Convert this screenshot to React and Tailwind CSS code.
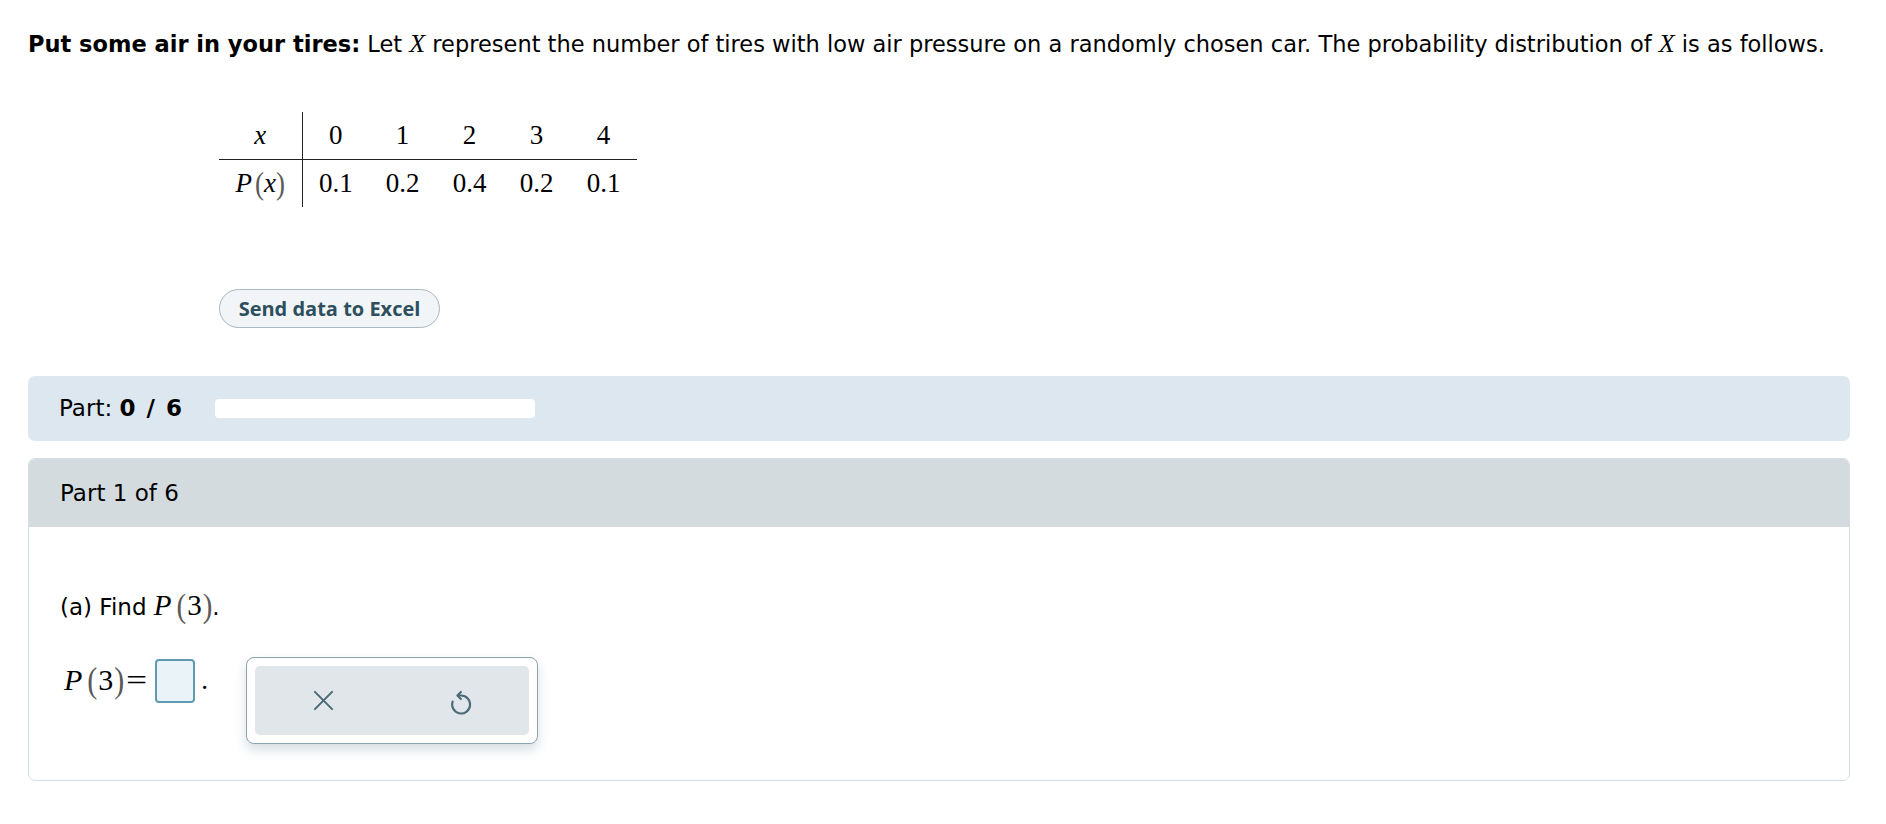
import React from "react";

// ALEKS-style question page: discrete distribution table + Part 1 of 6 card.

const XS = [0, 1, 2, 3, 4];
const PX = ["0.1", "0.2", "0.4", "0.2", "0.1"];

const serif = { fontFamily: '"Liberation Serif", "Times New Roman", serif' };

// thin grey stretchy parens like MathJax renders them
const Paren = ({ children }) => (
  <span className="inline-block scale-y-[1.18] font-light text-[#5a5a5a]">{children}</span>
);

const PofN = ({ n }) => (
  <span style={serif} className="whitespace-nowrap">
    <i>P</i>
    <span className="ml-[5px]">
      <Paren>(</Paren>
      <span className="mx-[1px]">{n}</span>
      <Paren>)</Paren>
    </span>
  </span>
);

const CloseIcon = () => (
  <svg viewBox="0 0 22 22" className="h-[21px] w-[21px]" fill="none" stroke="#4a6a77" strokeWidth="2.1" strokeLinecap="round">
    <path d="M2 2L20 20M20 2L2 20" />
  </svg>
);

// undo arrow: open circle, arrowhead at the top pointing left
const UndoIcon = () => (
  <svg viewBox="0 0 24 24" className="h-[30px] w-[30px]" fill="none" stroke="#4a6a77" strokeWidth="1.7" strokeLinecap="round" strokeLinejoin="round">
    <path d="M5.3 12.4A7.2 7.2 0 1 0 12 7.6H9.4" />
    <path d="M11.9 4.8L9.2 7.6l2.7 2.8" />
  </svg>
);

export default function App() {
  return (
    <div className="min-h-screen bg-white text-black" style={{ fontFamily: '"DejaVu Sans", Verdana, sans-serif' }}>
      <div className="pl-[28px] pr-[36px] pt-[29px] pb-10">
        <p className="whitespace-nowrap text-[22.5px] leading-[30px]">
          <b>Put some air in your tires:</b> Let{" "}
          <i style={serif} className="text-[26px] leading-none">X</i> represent the number of tires with low air pressure on a
          randomly chosen car. The probability distribution of{" "}
          <i style={serif} className="text-[26px] leading-none">X</i> is as follows.
        </p>

        {/* distribution table */}
        <div className="mt-[53px] ml-[191px]">
          <table style={serif} className="border-collapse text-[27px]">
            <tbody>
              <tr className="h-[47px]">
                <td className="w-[83px] border-r border-b border-[#222] text-center italic">x</td>
                {XS.map((x) => (
                  <td key={x} className="w-[67px] border-b border-[#222] text-center">{x}</td>
                ))}
              </tr>
              <tr className="h-[48px]">
                <td className="border-r border-[#222] text-center">
                  <i>P</i>
                  <span className="ml-[3px]">
                    <Paren>(</Paren>
                    <i>x</i>
                    <Paren>)</Paren>
                  </span>
                </td>
                {PX.map((p, i) => (
                  <td key={i} className="text-center">{p}</td>
                ))}
              </tr>
            </tbody>
          </table>
        </div>

        <button
          className="mt-[82px] ml-[191px] h-[39px] w-[221px] rounded-full border border-[#a9b8c1] bg-[#f2f5f7] text-[20px] font-bold text-[#2d4f5e]"
          style={{ fontFamily: '"Open Sans", Lato, sans-serif' }}
        >
          Send data to Excel
        </button>

        {/* progress strip */}
        <div className="mt-[48px] flex h-[65px] items-center gap-[32px] rounded-[7px] bg-[#dde7f0] pl-[31px]">
          <span className="text-[23px]">
            Part: <b className="tracking-[1.5px]">0 / 6</b>
          </span>
          <div className="h-[19px] w-[320px] rounded-[4px] bg-white" />
        </div>

        {/* part card */}
        <div className="mt-[17px] overflow-hidden rounded-[7px] border border-[#d6dde2]">
          <div className="flex h-[68px] items-center bg-[#d3dbdf] pl-[31px] text-[23px]">Part 1 of 6</div>
          <div className="pl-[31px] pt-[61px] pb-[36px]">
            <p className="text-[23px] leading-[34px]">
              (a) Find <span className="text-[29px]"><PofN n="3" /></span>.
            </p>
            <div className="mt-[33px] flex items-start">
              <span style={serif} className="ml-[4px] text-[30px] leading-[46px]">
                <PofN n="3" />
                <span className="ml-[4px] inline-block scale-x-[1.25]">=</span>
              </span>
              <span className="ml-[10px] mt-[2px] h-[44px] w-[40px] rounded-[4px] border-2 border-[#5e9bb0] bg-[#eaf4f8]" />
              <span style={serif} className="ml-[6px] text-[27px] leading-[46px]">.</span>
              <div className="ml-[38px] rounded-[8px] border border-[#8ca2ad] bg-white p-[8px] shadow-[0_6px_12px_rgba(40,70,90,0.18)]">
                <div className="flex h-[69px] w-[274px] items-center rounded-[5px] bg-[#e0e6e9]">
                  <div className="flex flex-1 justify-center">
                    <CloseIcon />
                  </div>
                  <div className="flex flex-1 justify-center">
                    <UndoIcon />
                  </div>
                </div>
              </div>
            </div>
          </div>
        </div>
      </div>
    </div>
  );
}
